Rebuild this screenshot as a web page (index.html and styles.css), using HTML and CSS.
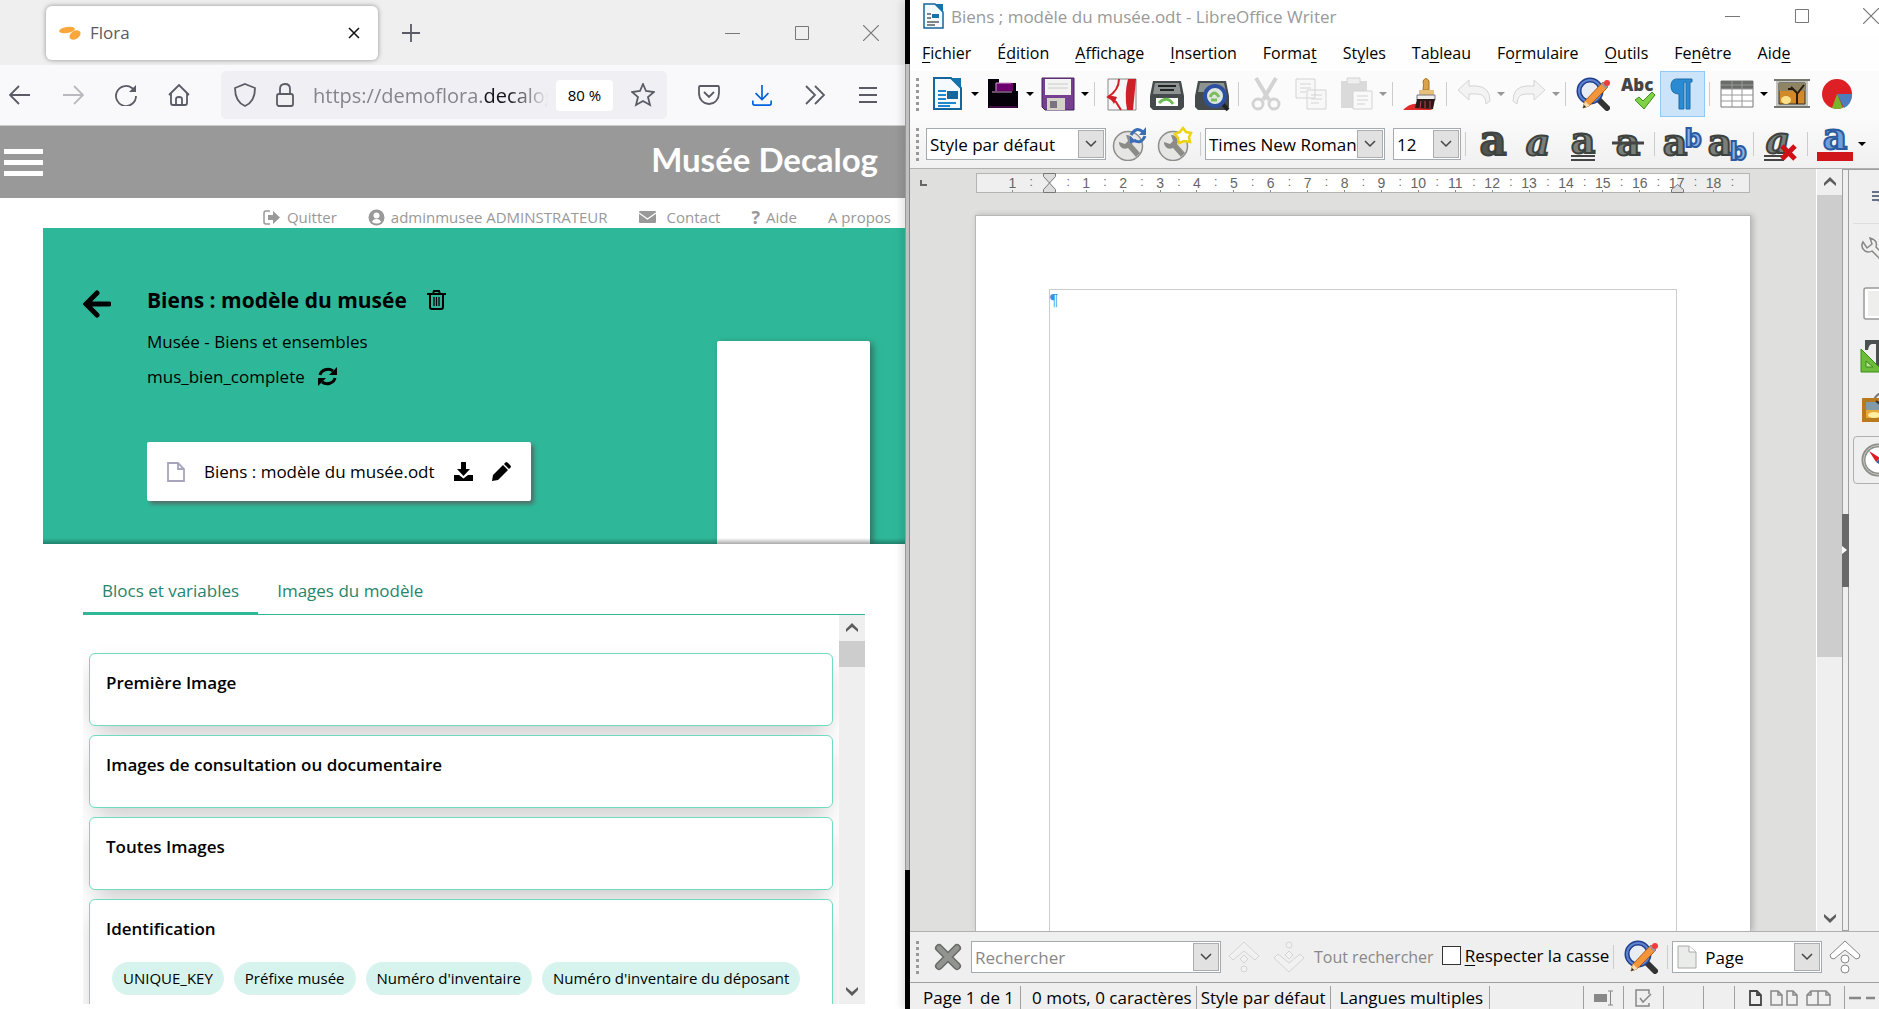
FILE: index.html
```html
<!DOCTYPE html>
<html lang="fr">
<head>
  <meta charset="UTF-8">
  <meta name="viewport" content="width=device-width, initial-scale=1.0">
  <title>Flora</title>
  <link rel="stylesheet" href="styles.css">
</head>
<body>
  <!-- Shared icons -->
  <svg class="defs" width="0" height="0">
    <symbol id="find" viewBox="0 0 34 34">
      <path d="M22 22l9 9" stroke="#333" stroke-width="6" stroke-linecap="round"/>
      <circle cx="14" cy="14" r="11" fill="#e8edf3" stroke="#1e3f8c" stroke-width="5"/>
      <circle cx="14" cy="14" r="11" fill="none" stroke="#5f83cf" stroke-width="2"/>
      <path d="M7 31l2-7L27 5l5 5-19 19z" fill="#f3953a" stroke="#b35a10"/>
      <path d="M7 31l2-7 5 5z" fill="#f6dcb0"/><path d="M7 31l1-3 2 2z" fill="#222"/>
      <path d="M25 7l5 5 2-2-5-5z" fill="#999"/><circle cx="31" cy="6" r="3" fill="#f33b3b"/>
    </symbol>
    <symbol id="down" viewBox="0 0 12 8"><path d="M1 1l5 5 5-5" fill="none" stroke="#444" stroke-width="1.5"/></symbol>
    <symbol id="chevup" viewBox="0 0 14 11"><path d="M1 7l6-6 6 6v3l-6-5-6 5z" fill="#5c5c5c"/></symbol>
    <symbol id="chevdown" viewBox="0 0 14 11"><path d="M1 4l6 6 6-6V1L7 6 1 1z" fill="#5c5c5c"/></symbol>
    <symbol id="min" viewBox="0 0 16 16"><path d="M0 8.500h15" stroke="#777"/></symbol>
    <symbol id="max" viewBox="0 0 16 16"><path d="M1.500 1.500h13v13h-13z" fill="none" stroke="#777"/></symbol>
    <symbol id="close" viewBox="0 0 16 16"><path d="M0 0l16 16M16 0L0 16" stroke="#777" stroke-width="1.200"/></symbol>
    <symbol id="gear" viewBox="0 0 34 34">
      <circle cx="16" cy="19" r="14.500" fill="#e6e6e4" stroke="#8d8d89" stroke-width="1.500"/>
      <path d="M7 15l6 2 3-3-2-6c7 0 8 6 6 9l8 9-4 4-8-9c-5 2-9-1-9-6z" fill="#8b8c88"/>
    </symbol>
  </svg>

  <div class="desktop">
    <!-- Browser window -->
    <section class="browser">
      <div class="tabstrip">
        <div class="tab">
          <svg width="24" height="16" viewBox="0 0 24 16"><ellipse cx="9" cy="5" rx="8" ry="3" fill="#f9a63a" transform="rotate(-9 9 5)"/><ellipse cx="17" cy="10" rx="6" ry="4" fill="#f9a63a" transform="rotate(-32 17 10)"/></svg>
          <span>Flora</span>
          <button class="icon" aria-label="Fermer l'onglet"><svg width="12" height="12" viewBox="0 0 12 12"><path d="M1 1l10 10M11 1L1 11" stroke="#111" stroke-width="1.500"/></svg></button>
        </div>
        <button class="icon newtab" aria-label="Nouvel onglet"><svg width="18" height="18" viewBox="0 0 18 18"><path d="M9 0v18M0 9h18" stroke="#5b5b66" stroke-width="1.800"/></svg></button>
        <div class="winbtns">
          <button aria-label="Réduire"><svg width="16" height="16"><use href="#min"/></svg></button>
          <button aria-label="Agrandir"><svg width="16" height="16"><use href="#max"/></svg></button>
          <button aria-label="Fermer"><svg width="16" height="16"><use href="#close"/></svg></button>
        </div>
      </div>

      <nav class="navbar">
        <button class="icon" aria-label="Précédent"><svg viewBox="0 0 22 22"><path d="M21 11H1M10 2l-9 9 9 9"/></svg></button>
        <button class="icon" disabled aria-label="Suivant"><svg viewBox="0 0 22 22"><path d="M1 11h20M12 2l9 9-9 9"/></svg></button>
        <button class="icon" aria-label="Actualiser"><svg viewBox="0 0 22 22"><path d="M21 12a10 10 0 1 1-4-8l3 3"/><path d="M21 1v7h-7z" fill="#5b5b66" stroke="none"/></svg></button>
        <button class="icon" aria-label="Accueil"><svg viewBox="0 0 22 22"><path d="M1 11L11 1l10 10M3 9v10q0 2 2 2h12q2 0 2-2V9M8 21v-6q0-2 3-2t3 2v6"/></svg></button>
        <div class="urlbar">
          <svg width="24" height="24" viewBox="0 0 24 24"><path d="M12 1l10 4c0 9-3 15-10 18C5 20 2 14 2 5z"/></svg>
          <svg width="20" height="24" viewBox="0 0 20 24"><rect x="2" y="11" width="16" height="12" rx="2"/><path d="M5 11V6q0-5 5-5t5 5v5"/></svg>
          <span class="url">https://demoflora.<b>decalog</b></span>
          <button class="zoom">80 %</button>
          <button class="icon" aria-label="Marque-page"><svg class="star" viewBox="0 0 24 24"><path d="M12 1l3 7 8 1-6 5 2 8-7-4-7 4 2-8-6-5 8-1z"/></svg></button>
        </div>
        <button class="icon" aria-label="Pocket"><svg viewBox="0 0 22 22"><path d="M2 2h18q1 0 1 2v5c0 6-4 11-10 11S1 15 1 9V4q0-2 1-2zM6 8l5 5 5-5"/></svg></button>
        <button class="icon blue" aria-label="Téléchargements"><svg viewBox="0 0 22 24"><path d="M11 1v16M4 10l7 7 7-7M1 18v3q0 2 2 2h16q2 0 2-2v-3"/></svg></button>
        <button class="icon" aria-label="Plus d'outils"><svg viewBox="0 0 22 22"><path d="M2 2l9 9-9 9M11 2l9 9-9 9"/></svg></button>
        <button class="icon" aria-label="Menu"><svg viewBox="0 0 22 22"><path d="M2 4h18M2 11h18M2 18h18"/></svg></button>
      </nav>

      <header class="site-header">
        <button class="burger" aria-label="Menu"><i></i><i></i><i></i></button>
        <h1>Musée Decalog</h1>
      </header>
      <nav class="userlinks">
        <a href="#"><svg width="18" height="15" viewBox="0 0 18 15"><path d="M7 1H3Q1 1 1 3v9q0 2 2 2h4" fill="none" stroke="#999" stroke-width="1.500"/><path d="M10 1l7 6.500-7 6.500v-4H5V5h5z" fill="#999"/></svg>Quitter</a>
        <a href="#"><svg width="17" height="17" viewBox="0 0 17 17"><circle cx="8.500" cy="8.500" r="8" fill="#999"/><circle cx="8.500" cy="6.500" r="3" fill="#fff"/><path d="M4 13q1-3 4.500-3t4.500 3q-4 3-9 0" fill="#fff"/></svg>adminmusee ADMINSTRATEUR</a>
        <a href="#" class="mail"><svg width="17" height="12" viewBox="0 0 17 12"><rect width="17" height="12" rx="1" fill="#999"/><path d="M0 2l8.500 6L17 2" fill="none" stroke="#fff" stroke-width="1.200"/></svg>Contact</a>
        <a href="#"><b>?</b>Aide</a>
        <a href="#">A propos</a>
      </nav>

      <section class="hero">
        <a href="#" class="back" aria-label="Retour"><svg width="28" height="28" viewBox="0 0 28 28"><path d="M26 14H4M14 3L3 14l11 11" fill="none" stroke="#000" stroke-width="5" stroke-linecap="round"/></svg></a>
        <div class="info">
          <h2>Biens : modèle du musée
            <button class="icon" aria-label="Supprimer"><svg width="19" height="20" viewBox="0 0 19 20" fill="none" stroke="#000" stroke-width="2"><path d="M0 4h19M6 4l1-3h5l1 3M3 4v13q0 2 2 2h9q2 0 2-2V4"/><path d="M7 7v9M9.500 7v9M12 7v9" stroke-width="1.300"/></svg></button>
          </h2>
          <p>Musée - Biens et ensembles</p>
          <p>mus_bien_complete
            <button class="icon" aria-label="Actualiser le modèle"><svg width="19" height="19" viewBox="0 0 19 19"><path d="M2 8a8 7 0 0 1 13-4M17 11a8 7 0 0 1-13 4" fill="none" stroke="#000" stroke-width="3"/><path d="M19 0v8h-8zM0 19v-8h8z"/></svg></button>
          </p>
          <div class="file">
            <svg width="18" height="20" viewBox="0 0 18 20"><path d="M1 1h10l6 6v12H1zM11 1v6h6" fill="none" stroke="#a7a4bd" stroke-width="1.800"/></svg>
            <span>Biens : modèle du musée.odt</span>
            <button class="icon" aria-label="Télécharger"><svg width="19" height="19" viewBox="0 0 19 19"><path d="M7 0h5v7h4l-6.500 7L3 7h4zM0 13h5l4.500 3.500L14 13h5v6H0z"/></svg></button>
            <button class="icon" aria-label="Modifier"><svg width="19" height="19" viewBox="0 0 19 19"><path d="M0 19l1-6L11 3l5 5L6 18zM12 2l2-2q1 0 2 1l2 2q1 1 1 2l-2 2z"/></svg></button>
          </div>
        </div>
        <div class="sheet"></div>
      </section>

      <section class="model">
        <div class="tabs">
          <a href="#" class="active">Blocs et variables</a>
          <a href="#">Images du modèle</a>
        </div>
        <div class="scroller">
          <div class="blocks">
            <article class="block"><h3>Première Image</h3></article>
            <article class="block"><h3>Images de consultation ou documentaire</h3></article>
            <article class="block"><h3>Toutes Images</h3></article>
            <article class="block">
              <h3>Identification</h3>
              <div class="chips">
                <span>UNIQUE_KEY</span>
                <span>Préfixe musée</span>
                <span>Numéro d'inventaire</span>
                <span>Numéro d'inventaire du déposant</span>
              </div>
            </article>
          </div>
          <div class="bar">
            <svg width="14" height="11"><use href="#chevup"/></svg>
            <div class="track"><div class="thumb"></div></div>
            <svg width="14" height="11"><use href="#chevdown"/></svg>
          </div>
        </div>
      </section>
    </section>

    <div class="divider"></div>

    <!-- Writer window -->
    <section class="writer">
      <div class="titlebar">
        <svg width="21" height="26" viewBox="0 0 21 26"><path d="M1 1h11l8 8v16H1z" fill="#f4fafd" stroke="#14669b" stroke-width="1.500"/><path d="M12 1h8v8z" fill="#1574ae"/><path d="M4 11h4M4 15h4M4 19h12M4 22h8" stroke="#111"/><path d="M9 11h7v4H9z" fill="#1574ae"/></svg>
        <span>Biens ; modèle du musée.odt - LibreOffice Writer</span>
        <div class="winbtns">
          <button aria-label="Réduire"><svg width="16" height="16"><use href="#min"/></svg></button>
          <button aria-label="Agrandir"><svg width="16" height="16"><use href="#max"/></svg></button>
          <button aria-label="Fermer"><svg width="16" height="16"><use href="#close"/></svg></button>
        </div>
      </div>
      <nav class="menubar">
        <button><u>F</u>ichier</button>
        <button>É<u>d</u>ition</button>
        <button><u>A</u>ffichage</button>
        <button><u>I</u>nsertion</button>
        <button>Forma<u>t</u></button>
        <button>St<u>y</u>les</button>
        <button>Ta<u>b</u>leau</button>
        <button>Fo<u>r</u>mulaire</button>
        <button><u>O</u>utils</button>
        <button>Fe<u>n</u>être</button>
        <button>Aid<u>e</u></button>
      </nav>

      <div class="toolbar">
        <i class="grip"></i>
        <button class="tool" aria-label="Nouveau"><svg viewBox="0 0 34 34"><path d="M3 1h17l10 10v21H3z" fill="#f4fafd" stroke="#14669b" stroke-width="2"/><path d="M20 1h10v10z" fill="#1574ae"/><path d="M7 14h8M7 18h8M7 22h8M7 26h18M7 29h12" stroke="#1f87cf" stroke-width="2"/><path d="M16 14h11v8H16z" fill="#14669b"/></svg></button><button class="drop" aria-label="Options de nouveau"></button>
        <button class="tool" aria-label="Ouvrir"><svg viewBox="0 0 34 34"><path d="M2 2h11v4h17v8h2v17H2z" fill="#06000a"/><path d="M10 14v-8h17v8H10" fill="#6b006e"/><path d="M10 14V6h15M6 15h20" fill="none" stroke="#cfa0d0"/><path d="M3 30h28" stroke="#7a1580"/></svg></button><button class="drop" aria-label="Options d'ouverture"></button>
        <button class="tool" aria-label="Enregistrer"><svg viewBox="0 0 34 34"><path d="M1 1h32v32H4l-3-3z" fill="#74408f" stroke="#47215c"/><path d="M4 2h26v16H4z" fill="#f3f3f1"/><path d="M7 7h20M7 11h20" stroke="#ccc"/><path d="M6 21h18v12H6z" fill="#d2d2c8"/><path d="M9 24h7v7H9z" fill="#7b727f"/></svg></button><button class="drop" aria-label="Options d'enregistrement"></button>
        <i class="sep"></i>
        <button class="tool" aria-label="Exporter en PDF"><svg viewBox="0 0 34 34"><path d="M3 2h28v31H3z" fill="#f8f6f6" stroke="#888"/><path d="M23 2h8l-3 31h-6q-3-16 1-31" fill="#cf2027"/><path d="M14 2Q14 13 3 20l8 5 5 8" fill="none" stroke="#cf2027" stroke-width="2"/><path d="M3 18l9 2-3 7z" fill="#cf2027"/></svg></button>
        <button class="tool" aria-label="Imprimer"><svg viewBox="0 0 34 34"><path d="M3 4h28l3 15v11l-3 3H3l-3-3V19z" fill="#454b4d"/><path d="M5 6h24l2 11H3z" fill="#8c9391"/><path d="M8 9h18M10 13h14" stroke="#222" stroke-width="2"/><path d="M6 21h22v8H6z" fill="#fff"/><path d="M9 26q8-8 14 1" fill="none" stroke="#6dbd55" stroke-width="3"/></svg></button>
        <button class="tool" aria-label="Aperçu"><svg viewBox="0 0 34 34"><path d="M3 4h28l3 15v11l-3 3H3l-3-3V19z" fill="#454b4d"/><path d="M5 6h24l2 9H3z" fill="#8c9391"/><path d="M27 26l6 7" stroke="#222" stroke-width="4"/><circle cx="20" cy="19" r="10" fill="#dfe8e0" stroke="#2d509f" stroke-width="4"/><path d="M15 20q4-8 9 0M16 23h6" fill="none" stroke="#7dbd60" stroke-width="3"/></svg></button>
        <i class="sep"></i>
        <button class="tool faded" disabled aria-label="Couper"><svg viewBox="0 0 34 34" fill="none" stroke="#999"><path d="M7 1l13 22M27 1L14 23" stroke-width="4"/><circle cx="9" cy="27" r="5" stroke-width="3"/><circle cx="25" cy="27" r="5" stroke-width="3"/></svg></button>
        <button class="tool faded" disabled aria-label="Copier"><svg viewBox="0 0 34 34" fill="#f6f6f6" stroke="#999"><path d="M2 2h19v19H2zM13 13h19v19H13z"/><path d="M6 7h11M6 11h11M6 15h6M17 18h11M17 22h11M17 26h8"/></svg></button>
        <button class="tool faded" disabled aria-label="Coller"><svg viewBox="0 0 34 34"><path d="M2 4h26v27H2z" fill="#aaa"/><path d="M8 1h13v6H8z" fill="#ddd" stroke="#999"/><path d="M14 14h19v18H14z" fill="#f8f8f8" stroke="#999"/><path d="M18 19h11M18 23h11M18 27h8" stroke="#999"/></svg></button><button class="drop faded" disabled aria-label="Options de collage"></button>
        <i class="sep"></i>
        <button class="tool" aria-label="Cloner le formatage"><svg viewBox="0 0 34 34"><path d="M0 33q9-9 18-5l12 5z" fill="#e12a2a"/><path d="M20 13q1-6 0-9 3-5 6 0v9z" fill="#d9a24b" stroke="#a8721d"/><path d="M16 13h15v6H16z" fill="#e6c078"/><path d="M14 18h18v5H14z" fill="#eee" stroke="#777"/><path d="M14 22h18l-2 10-18-1z" fill="#2a1717"/><path d="M18 24l-1 7M22 24v7M27 24v7" stroke="#b8444b"/></svg></button>
        <i class="sep"></i>
        <button class="tool faded" disabled aria-label="Annuler"><svg viewBox="0 0 34 34"><path d="M1 13L12 3v6h8q13 1 13 15l-4 3q0-10-9-10h-8v6z" fill="#e8e8e8" stroke="#999"/></svg></button><button class="drop faded" disabled aria-label="Historique d'annulation"></button>
        <button class="tool faded" disabled aria-label="Rétablir"><svg viewBox="0 0 34 34"><path d="M33 13L22 3v6h-8Q1 10 1 24l4 3q0-10 9-10h8v6z" fill="#e8e8e8" stroke="#999"/></svg></button><button class="drop faded" disabled aria-label="Historique de rétablissement"></button>
        <i class="sep"></i>
        <button class="tool" aria-label="Rechercher et remplacer"><svg><use href="#find"/></svg></button>
        <button class="tool" aria-label="Orthographe"><svg viewBox="0 0 34 34"><text x="0" y="14" class="abc">Abc</text><path d="M14 23l4-3 4 4 9-9 3 3-11 14z" fill="#7fd146" stroke="#3f8f1d"/></svg></button>
        <button class="tool pressed" aria-label="Marques de formatage"><svg viewBox="0 0 34 34"><path d="M26 2v3h-2v27h-4V5h-2v27h-5V17q-8 0-8-8t8-7z" fill="#2b8bd0" stroke="#1f6da8"/></svg></button>
        <i class="sep"></i>
        <button class="tool" aria-label="Tableau"><svg viewBox="0 0 34 34"><path d="M1 4h32v26H1z" fill="#fff" stroke="#777"/><path d="M1 4h32v8H1z" fill="#6a6c69"/><path d="M1 8h32M1 12h32M1 18h32M1 24h32M12 4v26M22 4v26" stroke="#999"/></svg></button><button class="drop" aria-label="Options de tableau"></button>
        <button class="tool" aria-label="Image"><svg viewBox="0 0 34 34"><path d="M1 3h32v28H1z" fill="#c4c4be"/><path d="M-1 3h36M-1 30h36" stroke="#77776f" stroke-width="2"/><path d="M4 6h26v21H4z" fill="#d28a28" stroke="#333"/><path d="M4 6h26v8H4z" fill="#8f8463"/><ellipse cx="11" cy="23" rx="5" ry="4" fill="#ffe08a"/><path d="M22 27V16l-6-6M22 17l7-9M18 12h-5" stroke="#2b1c10" fill="none" stroke-width="2"/></svg></button>
        <button class="tool" aria-label="Diagramme"><svg viewBox="0 0 34 34"><circle cx="17" cy="17" r="15" fill="#dd2026"/><path d="M17 17h15q0 10-8 14z" fill="#4a7ebd"/><path d="M17 17l6 14q-6 2-11 0z" fill="#78b52a"/></svg></button>
      </div>

      <div class="toolbar format">
        <i class="grip"></i>
        <label class="combo"><select aria-label="Style de paragraphe"><option>Style par défaut</option></select><span><svg width="12" height="8"><use href="#down"/></svg></span></label>
        <button class="tool" aria-label="Actualiser le style"><svg viewBox="0 0 34 34"><use href="#gear"/><path d="M19 8q5-9 12-3M33 9q-4 9-11 4" fill="none" stroke="#3a6eb5" stroke-width="3"/><path d="M34 0v8h-7zM18 16V9l7 6z" fill="#3a6eb5"/></svg></button>
        <button class="tool" aria-label="Nouveau style"><svg viewBox="0 0 34 34"><use href="#gear"/><path d="M26 1l3 4 5 1-2 4 1 5-6-1-5 2-1-5-3-4 5-2z" fill="#fff" stroke="#eed410" stroke-width="2.500"/></svg></button>
        <i class="sep"></i>
        <label class="combo"><select aria-label="Police"><option>Times New Roman</option></select><span><svg width="12" height="8"><use href="#down"/></svg></span></label>
        <label class="combo size"><select aria-label="Taille"><option>12</option></select><span><svg width="12" height="8"><use href="#down"/></svg></span></label>
        <i class="sep"></i>
        <button class="tool" aria-label="Gras"><svg viewBox="0 0 34 34"><text x="17" y="28" class="letter heavy">a</text></svg></button>
        <button class="tool" aria-label="Italique"><svg viewBox="0 0 34 34"><text x="17" y="28" class="letter italic">a</text></svg></button>
        <button class="tool" aria-label="Souligné"><svg viewBox="0 0 34 34"><text x="17" y="26" class="letter">a</text><path d="M5 29h24M5 33h24" stroke="#444" stroke-width="2"/></svg></button>
        <button class="tool" aria-label="Barré"><svg viewBox="0 0 34 34"><text x="17" y="28" class="letter">a</text><path d="M1 16h32" stroke="#444" stroke-width="3"/></svg></button>
        <i class="sep"></i>
        <button class="tool" aria-label="Exposant"><svg viewBox="0 0 34 34"><text x="10" y="28" class="letter">a</text><text x="28" y="20" class="letter small">b</text></svg></button>
        <button class="tool" aria-label="Indice"><svg viewBox="0 0 34 34"><text x="10" y="28" class="letter">a</text><text x="28" y="33" class="letter small">b</text></svg></button>
        <i class="sep"></i>
        <button class="tool" aria-label="Effacer le formatage"><svg viewBox="0 0 34 34"><text x="14" y="26" class="letter italic">a</text><path d="M0 29h20M0 33h20" stroke="#444" stroke-width="2"/><path d="M18 19l13 13M31 19L18 32" stroke="#d01015" stroke-width="5"/></svg></button>
        <i class="sep"></i>
        <button class="tool" aria-label="Couleur de police"><svg viewBox="0 0 34 34"><text x="17" y="22" class="letter blue">a</text><path d="M-1 25h36v9H-1z" fill="#d0161b"/></svg></button><button class="drop" aria-label="Choisir la couleur"></button>
      </div>

      <div class="work">
        <div class="canvas">
          <div class="rulerrow">
            <i class="tabstop"></i>
            <div class="ruler">
              <span>1</span><span class="zero"><svg width="13" height="20" viewBox="0 0 13 20"><path d="M.5.5h12v3L6.500 10l6 6.500v3H.5v-3l6-6.500-6-6.500z" fill="#ddd" stroke="#777"/></svg></span><span>1</span><span>2</span><span>3</span><span>4</span><span>5</span><span>6</span><span>7</span><span>8</span><span>9</span><span>10</span><span>11</span><span>12</span><span>13</span><span>14</span><span>15</span><span>16</span><span class="end">17<svg width="13" height="9" viewBox="0 0 13 9"><path d="M.5 8.500v-3l6-5 6 5v3z" fill="#ddd" stroke="#777"/></svg></span><span>18</span>
            </div>
          </div>
          <div class="paper"><div class="textarea"><span>¶</span></div></div>
        </div>
        <div class="bar">
          <svg width="14" height="11"><use href="#chevup"/></svg>
          <div class="track"><div class="thumb"></div></div>
          <svg width="14" height="11"><use href="#chevdown"/></svg>
        </div>
        <div class="splitter"><button aria-label="Masquer le volet"></button></div>
        <aside class="sidebar">
          <button class="settings" aria-label="Paramètres"><svg width="30" height="12" viewBox="0 0 30 12"><path d="M0 1h20M0 5h20M0 9h20" stroke="#3c4668" stroke-width="1.500"/><path d="M6 10h8l-4 3z" fill="#222"/></svg></button>
          <button aria-label="Propriétés"><svg width="32" height="32" viewBox="0 0 32 32"><path d="M3 6q-3 5 2 9 4 2 7 0l14 14 4-4-14-14q2-7-6-9l2 6-5 4z" fill="#f0f0ee" stroke="#888" stroke-width="1.500"/></svg></button>
          <button aria-label="Page"><svg width="32" height="34" viewBox="0 0 32 34"><rect x="4" y="1" width="28" height="31" rx="2" fill="#fff" stroke="#999" stroke-width="1.500"/><path d="M8 4h24v25H8z" fill="#eeeeec"/></svg></button>
          <button aria-label="Styles"><svg width="32" height="34" viewBox="0 0 32 34"><path d="M5 1h27v10h-3q-1-6-6-6v26h-7V5h-4q-3 0-4 6H5z" fill="#4a4f50"/><path d="M1 10l23 23H1z" fill="#6dbb3a" stroke="#3b8b14"/><path d="M6 22l7 6H6z" fill="#b9e49c" stroke="#3b8b14"/></svg></button>
          <button aria-label="Galerie"><svg width="32" height="34" viewBox="0 0 32 34"><path d="M14 9q3-7 8-6" fill="none" stroke="#777" stroke-width="2"/><rect x="4" y="9" width="28" height="20" fill="#809aaa" stroke="#b97a1d" stroke-width="4"/><path d="M6 19h25v8H6z" fill="#e9a83a"/><ellipse cx="14" cy="24" rx="6" ry="3" fill="#fff0a0"/><path d="M21 22v-8l-5-4" stroke="#333" fill="none" stroke-width="2"/></svg></button>
          <button class="current" aria-label="Navigateur"><svg width="34" height="34" viewBox="0 0 34 34"><circle cx="18" cy="17" r="14.500" fill="#fff" stroke="#8d8f89" stroke-width="4"/><circle cx="18" cy="17" r="14.500" fill="none" stroke="#c8c9c4"/><path d="M9 8l11 7-4 4z" fill="#e01b24"/><path d="M16 19l4-4 7 11z" fill="#3465a4"/></svg></button>
        </aside>
      </div>

      <div class="findbar">
        <i class="grip"></i>
        <button class="icon" aria-label="Fermer la recherche"><svg width="28" height="28" viewBox="0 0 28 28"><path d="M5 5l18 18M23 5L5 23" stroke="#686a66" stroke-width="8" stroke-linecap="round"/><path d="M5 5l18 18M23 5L5 23" stroke="#92958f" stroke-width="5" stroke-linecap="round"/></svg></button>
        <div class="combo search"><input type="text" aria-label="Rechercher" placeholder="Rechercher"><span><svg width="12" height="8"><use href="#down"/></svg></span></div>
        <button class="tool faded" disabled aria-label="Précédent"><svg viewBox="0 0 34 34" fill="#f4f4f4" stroke="#aaa"><path d="M17 2l15 14-4 4-11-9-11 9-4-4zM17 15l4 4-4 4-4-4z"/><circle cx="17" cy="29" r="3"/></svg></button>
        <button class="tool faded" disabled aria-label="Suivant"><svg viewBox="0 0 34 34" fill="#f4f4f4" stroke="#aaa"><path d="M17 32L2 18l4-4 11 9 11-9 4 4zM17 11l4 4-4 4-4-4z"/><circle cx="17" cy="5" r="3"/></svg></button>
        <button class="all" disabled>Tout rechercher</button>
        <label class="check"><input type="checkbox"><span><u>R</u>especter la casse</span></label>
        <i class="sep"></i>
        <button class="tool" aria-label="Rechercher et remplacer"><svg><use href="#find"/></svg></button>
        <i class="sep"></i>
        <label class="combo nav"><svg width="20" height="24" viewBox="0 0 20 24"><path d="M1 1h11l7 6v16H1z" fill="#e9ece9" stroke="#aaa"/><path d="M12 1v6h7" fill="#fff" stroke="#aaa"/></svg><select aria-label="Naviguer par"><option>Page</option></select><span><svg width="12" height="8"><use href="#down"/></svg></span></label>
        <button class="tool" aria-label="Page précédente"><svg viewBox="0 0 34 34" fill="#fff" stroke="#888"><path d="M17 1l15 14q0 4-4 4L17 10 6 19q-4 0-4-4z"/><circle cx="17" cy="19" r="4"/><circle cx="17" cy="29" r="4"/></svg></button>
      </div>

      <footer class="status">
        <span>Page 1 de 1</span>
        <span class="words">0 mots, 0 caractères</span>
        <span>Style par défaut</span>
        <span class="lang">Langues multiples</span>
        <span class="fill"></span>
        <span class="cell"><svg width="20" height="16" viewBox="0 0 20 16"><path d="M0 4h13v8H0z" fill="#888"/><path d="M14 1h5M14 15h5M16.500 1v14" stroke="#888"/></svg></span>
        <span class="cell"><svg width="18" height="18" viewBox="0 0 18 18"><path d="M14 5V1H1v16h13v-3M5 9l3 4 8-8" fill="none" stroke="#888" stroke-width="1.500"/></svg></span>
        <span class="cell"></span>
        <span class="cell narrow"></span>
        <span class="views">
          <svg width="13" height="16" viewBox="0 0 13 16"><path d="M1 1h7l4 4v10H1zM8 1v4h4" fill="none" stroke="#444" stroke-width="1.800"/></svg>
          <svg width="28" height="16" viewBox="0 0 28 16"><path d="M1 1h7l4 4v10H1zM8 1v4h4M17 1h6l4 4v10H17zM23 1v4h4" fill="none" stroke="#888" stroke-width="1.500"/></svg>
          <svg width="25" height="16" viewBox="0 0 25 16"><path d="M5 1h7v14H1V5zM5 1v4H1M12 1h8l4 4v10H12zM20 1v4h4" fill="none" stroke="#888" stroke-width="1.500"/></svg>
        </span>
        <span class="slider"><svg width="26" height="16" viewBox="0 0 26 16"><path d="M0 8h12M17 8h9" stroke="#888" stroke-width="2.500"/></svg></span>
      </footer>
    </section>
  </div>
</body>
</html>
```
FILE: styles.css
```css
*,
*::before,
*::after {
    box-sizing: border-box;
}

body {
    margin: 0;
    font-family: "Open Sans", "Noto Sans", sans-serif;
    font-size: 17px;
    color: #000;
}

button {
    font: inherit;
    color: inherit;
    background: none;
    border: 0;
    padding: 0;
}

svg {
    display: block;
    flex: none;
}

a {
    color: inherit;
    text-decoration: none;
}

.defs {
    position: absolute;
}

.desktop {
    display: grid;
    grid-template-columns: 905fr 5px 969fr;
    height: 100vh;
    overflow: hidden;
}

.icon {
    display: inline-flex;
    flex: none;
}

/* Browser */
.browser {
    display: flex;
    flex-direction: column;
    min-width: 0;
    min-height: 0;
    background: #fff;
}

.tabstrip {
    display: flex;
    align-items: center;
    height: 65px;
    flex: none;
    padding-left: 46px;
    background: #efefef;
}

.tab {
    display: flex;
    align-items: center;
    gap: 8px;
    width: 332px;
    height: 54px;
    padding: 0 18px 0 12px;
    background: #fff;
    border-radius: 6px;
    box-shadow: 0 0 5px rgba(0,0,0,0.4);
    color: #5b5b66;
}

.tab span {
    flex: 1;
}

.newtab {
    margin-left: 24px;
}

.winbtns {
    display: flex;
    margin-left: auto;
}

.winbtns button {
    display: flex;
    justify-content: center;
    width: 69px;
}

.navbar {
    display: flex;
    align-items: center;
    gap: 31px;
    height: 61px;
    flex: none;
    padding: 0 26px 0 9px;
    background: #f9f9fb;
    border-bottom: 1px solid #ccc;
}

.navbar svg {
    fill: none;
    stroke: #5b5b66;
    stroke-width: 1.8;
}

.navbar .icon svg {
    width: 22px;
    height: 22px;
}

.navbar .icon .star {
    width: 24px;
    height: 24px;
}

.navbar .icon:disabled {
    opacity: 0.4;
}

.navbar .blue svg {
    stroke: #0061e0;
}

.urlbar {
    display: flex;
    align-items: center;
    flex: 1;
    min-width: 0;
    height: 48px;
    padding: 0 12px;
    gap: 18px;
    background: #f0f0f4;
    border-radius: 5px;
}

.url {
    flex: 1;
    overflow: hidden;
    white-space: nowrap;
    font-size: 20px;
    color: #85858c;
    -webkit-mask-image: linear-gradient(to left, transparent, #000 40px);
    mask-image: linear-gradient(to left, transparent, #000 40px);
}

.url b {
    font-weight: 400;
    color: #15141a;
}

.zoom {
    width: 57px;
    height: 31px;
    margin-left: -10px;
    font-size: 15px;
    background: #fff;
    border-radius: 4px;
}

.site-header {
    display: flex;
    align-items: center;
    justify-content: space-between;
    height: 72px;
    flex: none;
    padding: 0 27px 0 4px;
    background: #999;
    color: #fff;
}

.site-header h1 {
    margin: 0;
    padding-bottom: 6px;
    font-family: Lato, sans-serif;
    font-size: 33px;
}

.burger {
    display: grid;
    gap: 6px;
    width: 39px;
}

.burger i {
    height: 5px;
    background: #fff;
}

.userlinks {
    display: flex;
    align-items: center;
    justify-content: flex-end;
    gap: 31px;
    height: 30px;
    flex: none;
    padding: 8px 14px 0 0;
    font-size: 15px;
    line-height: 20px;
    color: #999;
}

.userlinks a {
    display: flex;
    align-items: center;
    gap: 6px;
}

.userlinks .mail {
    gap: 11px;
}

.userlinks b {
    font-size: 18px;
    line-height: 18px;
}

.hero {
    display: flex;
    justify-content: space-between;
    height: 316px;
    flex: none;
    margin-left: 43px;
    padding: 56px 35px 0 40px;
    background: linear-gradient(to top, rgba(0,0,0,0.3), transparent 6px) #2eb899;
}

.back {
    padding-top: 6px;
}

.info {
    flex: 1;
    padding-left: 36px;
}

.info h2 {
    display: flex;
    align-items: center;
    gap: 20px;
    margin: 0 0 8px;
    font-size: 21px;
    line-height: 32px;
}

.info p {
    display: flex;
    align-items: center;
    gap: 13px;
    margin: 0;
    line-height: 35px;
}

.file {
    display: inline-flex;
    align-items: center;
    gap: 19px;
    height: 59px;
    margin-top: 48px;
    padding: 0 20px;
    background: #fff;
    border-radius: 2px;
    box-shadow: 3px 3px 4px rgba(90,90,90,0.8);
}

.sheet {
    align-self: flex-end;
    width: 153px;
    height: 203px;
    background: linear-gradient(to top, #aaa, #fff 6px);
    border-radius: 2px 2px 0 0;
    box-shadow: 3px 2px 6px rgba(60,60,60,0.6);
    clip-path: inset(-10px -12px 0 -10px);
}

.model {
    display: flex;
    flex-direction: column;
    flex: 1;
    min-height: 0;
    padding: 24px 40px 5px 83px;
}

.tabs {
    display: flex;
    height: 47px;
    flex: none;
    border-bottom: 1px solid #2eb899;
    color: #26856c;
}

.tabs a {
    padding: 11px 19px 0;
    height: 47px;
}

.tabs .active {
    border-bottom: 3px solid #2eb899;
}

.scroller {
    display: flex;
    flex: 1;
    min-height: 0;
}

.blocks {
    display: flex;
    flex-direction: column;
    gap: 9px;
    flex: 1;
    padding: 38px 6px 0;
    overflow: hidden;
}

.block {
    flex: none;
    min-height: 73px;
    padding: 14px 16px;
    background: #fff;
    border: 1px solid #6fdbc0;
    border-radius: 6px;
    box-shadow: 0 10px 24px -6px rgba(0,0,0,0.25);
}

.block h3 {
    margin: 0;
    font-size: 17px;
    font-weight: 600;
    line-height: 30px;
}

.chips {
    display: flex;
    gap: 10px;
    padding: 18px 6px 20px;
    white-space: nowrap;
}

.chips span {
    padding: 0 11px;
    border-radius: 17px;
    background: #d6f4ed;
    font-size: 15px;
    line-height: 33px;
}

/* Scroll bars */
.bar {
    display: flex;
    flex-direction: column;
    align-items: center;
    width: 26px;
    flex: none;
    padding: 7px 0;
    gap: 8px;
    background: #efefef;
}

.track {
    flex: 1;
    width: 100%;
}

.thumb {
    height: 26px;
    background: #cdcdcd;
}

.divider {
    background:
        linear-gradient(#000 64px, transparent 64px, transparent calc(100% - 139px), #000 calc(100% - 139px)),
        linear-gradient(to right, #999 1px, #c0c0c0 1px, #c0c0c0 4px, #888 4px);
    box-shadow: -2px 0 8px rgba(0,0,0,0.2);
    z-index: 1;
}

/* Writer */
.writer {
    display: flex;
    flex-direction: column;
    min-width: 0;
    min-height: 0;
    overflow: hidden;
    background: #efefef;
    z-index: 2;
}

.titlebar {
    display: flex;
    align-items: center;
    gap: 7px;
    height: 34px;
    flex: none;
    margin-right: -26px;
    padding: 0 0 2px 13px;
    background: #fff;
    color: #999;
}

.menubar {
    display: flex;
    gap: 26px;
    height: 37px;
    flex: none;
    padding-left: 12px;
    background: #fefefe;
    font-size: 16px;
    white-space: nowrap;
}

u {
    text-underline-offset: 3px;
    text-decoration-thickness: 1px;
}

.toolbar {
    display: flex;
    align-items: center;
    height: 46px;
    flex: none;
    padding-left: 6px;
    background: #fbfbfb;
}

.format {
    height: 52px;
    padding-top: 3px;
    background: linear-gradient(#fbfbfb, #f0f0f0);
    border-bottom: 1px solid #b0b0b0;
}

.grip {
    width: 3px;
    height: 33px;
    flex: none;
    margin-right: 6px;
    background: repeating-linear-gradient(#999 0 3px, transparent 3px 6px);
}

.format .grip {
    margin-right: 7px;
}

.tool {
    display: flex;
    align-items: center;
    justify-content: center;
    width: 45px;
    height: 46px;
    flex: none;
}

.tool svg {
    width: 34px;
    height: 34px;
    overflow: visible;
}

.faded {
    opacity: 0.4;
}

.pressed {
    background: #cce4f9;
    border: 1px solid #90c8f6;
}

.drop {
    width: 10px;
    height: 46px;
    flex: none;
}

.drop::before {
    content: "";
    display: block;
    margin: 0 auto;
    width: 8px;
    border: 4px solid transparent;
    border-top-color: #000;
    border-bottom: 0;
}

.sep {
    width: 1px;
    height: 24px;
    flex: none;
    margin: 0 4px;
    background: #ccc;
}

.abc {
    font: 800 17px "Open Sans", sans-serif;
    fill: #444;
}

.letter {
    font: 700 38px "DejaVu Serif", serif;
    fill: #7b7f7a;
    stroke: #3c4240;
    stroke-width: 2;
    text-anchor: middle;
}

.heavy {
    font-size: 42px;
    fill: #50554f;
}

.italic {
    font-style: italic;
}

.small {
    font: 700 24px "DejaVu Sans", sans-serif;
    fill: #8db2e3;
    stroke: #2c5a9e;
}

.letter.blue {
    fill: #6f9fdb;
    stroke: #2c5a9e;
}

.combo {
    display: flex;
    align-items: stretch;
    width: 180px;
    height: 32px;
    flex: none;
    padding: 1px;
    background: #fff;
    border: 1px solid #a5a9b0;
}

.combo select,
.combo input {
    flex: 1;
    min-width: 0;
    padding: 0 0 0 2px;
    font: inherit;
    color: #000;
    background: none;
    border: 0;
    appearance: none;
}

.combo input::placeholder {
    color: #888;
}

.combo span {
    display: flex;
    align-items: center;
    justify-content: center;
    width: 26px;
    flex: none;
    background: #e1e1e1;
    border: 1px solid #adadad;
    pointer-events: none;
}

.size {
    width: 68px;
    margin-left: 8px;
}

.work {
    display: flex;
    flex: 1;
    min-height: 0;
    overflow: hidden;
}

.canvas {
    display: flex;
    flex-direction: column;
    align-items: center;
    flex: 1;
    min-width: 0;
    background: #dfdfdd;
    border-right: 1px solid #fff;
    overflow: hidden;
}

.rulerrow {
    position: relative;
    padding: 4px 0 22px;
}

.tabstop {
    position: absolute;
    left: -56px;
    top: 11px;
    width: 7px;
    height: 6px;
    border: solid #666;
    border-width: 0 0 2px 2px;
}

.ruler {
    display: grid;
    grid-template-columns: repeat(20, 1fr);
    width: 774px;
    height: 20px;
    padding: 0 17px;
    background: linear-gradient(to right, #efefef 74px, #fff 74px, #fff 700px, #efefef 700px);
    border: 1px solid #b4b4b4;
    font-family: "Liberation Sans", Arial, sans-serif;
    font-size: 14px;
    line-height: 18px;
    text-align: center;
    color: #666;
}

.ruler span {
    position: relative;
    background: linear-gradient(#888, #888) center bottom / 1px 2px no-repeat;
}

.ruler span::after {
    content: ":";
    position: absolute;
    right: -2px;
    top: -1px;
    font-size: 12px;
}

.ruler .zero svg {
    position: absolute;
    left: calc(50% - 6px);
    top: -1px;
}

.ruler .end svg {
    position: absolute;
    left: calc(50% - 6px);
    bottom: -1px;
}

.paper {
    flex: 1;
    width: 776px;
    padding: 73px 73px 0;
    background: #fff;
    border: 1px solid #b8b8b6;
    border-bottom: 0;
    box-shadow: 2px 0 6px rgba(0,0,0,0.2);
}

.textarea {
    height: 100%;
    border: 1px solid #ccc;
    border-bottom: 0;
    font-family: "Liberation Serif", serif;
    font-size: 17px;
    line-height: 20px;
    color: #3096dd;
}

.work .bar {
    width: 25px;
}

.work .thumb {
    height: 65%;
}

.splitter {
    display: flex;
    align-items: center;
    width: 7px;
    flex: none;
    border: 1px solid #a0a0a0;
}

.splitter button {
    display: flex;
    align-items: center;
    width: 7px;
    height: 73px;
    flex: none;
    margin: 0 -1px;
    background: #696969;
}

.splitter button::before {
    content: "";
    border: 4px solid transparent;
    border-left: 5px solid #fff;
    border-right: 0;
}

.sidebar {
    display: flex;
    flex-direction: column;
    width: 30px;
    flex: none;
    overflow: hidden;
    border-top: 1px solid #a0a0a0;
    gap: 4px;
}

.sidebar button {
    display: flex;
    align-items: center;
    height: 48px;
    width: 50px;
    flex: none;
    margin-left: 4px;
    padding-left: 6px;
    border: 1px solid transparent;
}

.sidebar .settings {
    height: 54px;
    padding-left: 18px;
    border-bottom-color: #ddd;
}

.sidebar .current {
    border-color: #b0b0b0;
    border-radius: 4px;
}

.findbar {
    display: flex;
    align-items: center;
    height: 51px;
    flex: none;
    padding-left: 6px;
    border-top: 1px solid #b0b0b0;
    white-space: nowrap;
}

.findbar .icon {
    margin: 0 9px;
}

.search {
    width: 250px;
}

.all {
    margin-left: 3px;
    font-size: 16px;
    color: #888;
}

.check {
    display: flex;
    align-items: center;
    gap: 4px;
    margin: 0 0 0 8px;
    line-height: 20px;
    padding-bottom: 3px;
}

.check input {
    appearance: none;
    width: 19px;
    height: 19px;
    margin: 0;
    background: #fff;
    border: 1px solid #333;
}

.findbar .nav {
    width: 150px;
    padding-left: 4px;
}

.nav svg {
    align-self: center;
}

.nav select {
    padding-left: 8px;
}

.status {
    display: flex;
    height: 27px;
    flex: none;
    padding-top: 3px;
    border-top: 1px solid #a0a0a0;
    white-space: nowrap;
    line-height: 23px;
}

.status > span {
    padding: 0 4px;
    border-right: 1px solid #a0a0a0;
}

.status > span:first-child {
    padding: 0 6px 0 13px;
}

.status .words {
    padding-left: 11px;
}

.status .lang {
    padding: 0 6px 0 9px;
}

.status .fill {
    flex: 1;
}

.status .cell,
.status .views,
.status .slider {
    display: flex;
    align-items: center;
    justify-content: center;
    width: 40px;
    flex: none;
}

.status .narrow {
    width: 31px;
}

.status .views {
    gap: 8px;
    width: 110px;
}

.status .slider {
    width: 34px;
    border: 0;
}
```
